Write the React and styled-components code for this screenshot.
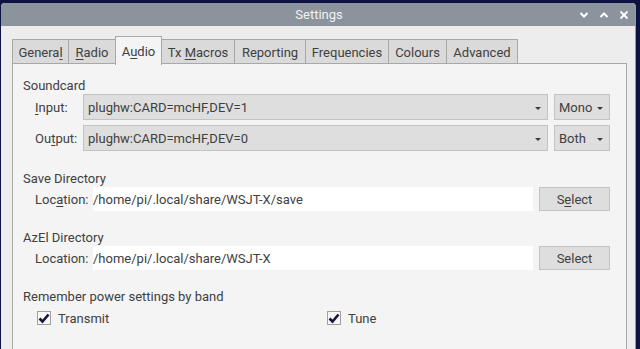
import React from "react";
import styled, { createGlobalStyle } from "styled-components";

const Global = createGlobalStyle`
  html, body { margin: 0; padding: 0; }
  body {
    background: #0c1242;
    font-family: Roboto, "Liberation Sans", sans-serif;
    overflow: hidden;
    width: 640px;
    height: 349px;
  }
`;

const Desktop = styled.div`
  width: 640px;
  height: 349px;
  padding: 3px 0 0 1px;
  box-sizing: border-box;
  display: flex;
`;

const Window = styled.div`
  width: 634px;
  height: 346px;
  background: #ededed;
  border-radius: 4px 4px 0 0;
  border-right: 1px solid #9a9a9a;
  display: flex;
  flex-direction: column;
  overflow: hidden;
`;

const TitleBar = styled.div`
  height: 23px;
  background: #8b949c;
  display: grid;
  grid-template-columns: 1fr auto 1fr;
  align-items: center;
  color: #f2f2f2;
  font-size: 13px;
`;

const Title = styled.div`
  grid-column: 2;
  padding-left: 2px;
`;

const Controls = styled.div`
  grid-column: 3;
  justify-self: end;
  display: flex;
  gap: 10px;
  padding-right: 6px;
  align-items: center;
`;

const Body = styled.div`
  flex: 1;
  display: flex;
  flex-direction: column;
  padding: 10px 8px 0 11px;
`;

const TabRow = styled.div`
  display: flex;
  align-items: flex-end;
  position: relative;
  z-index: 1;
`;

const Tab = styled.div`
  box-sizing: border-box;
  width: ${(p) => p.$w}px;
  height: ${(p) => (p.$active ? 29 : 25)}px;
  margin-left: ${(p) => (p.$first ? 0 : -1)}px;
  margin-bottom: ${(p) => (p.$active ? -1 : 0)}px;
  border: 1px solid #a8a8a8;
  border-bottom: ${(p) => (p.$active ? "none" : "1px solid #a8a8a8")};
  background: ${(p) => (p.$active ? "#f4f4f4" : "#dadada")};
  color: #404040;
  font-size: 13px;
  display: flex;
  align-items: center;
  justify-content: center;
  padding-top: ${(p) => (p.$active ? 0 : 1)}px;
  position: relative;
  z-index: ${(p) => (p.$active ? 2 : 1)};
  white-space: pre;
`;

const Panel = styled.div`
  flex: 1;
  margin-top: -1px;
  border: 1px solid #a8a8a8;
  border-bottom: none;
  background: #f4f4f4;
  padding: 14px 16px 0 10px;
  display: flex;
  flex-direction: column;
  color: #404040;
  font-size: 13px;
`;

const Group = styled.div`
  display: flex;
  flex-direction: column;
  margin-top: ${(p) => p.$gap || 0}px;
`;

const GroupTitle = styled.div`
  height: 16px;
  line-height: 16px;
`;

const Rows = styled.div`
  display: flex;
  flex-direction: column;
  gap: 5px;
  padding-left: 12px;
`;

const Row = styled.div`
  display: flex;
  align-items: center;
  height: ${(p) => p.$h}px;
`;

const Label = styled.div`
  width: ${(p) => p.$w}px;
  flex: none;
`;

const U = styled.span`
  text-decoration: underline;
  text-underline-offset: 2px;
`;

const Combo = styled.div`
  box-sizing: border-box;
  height: 100%;
  flex: ${(p) => (p.$w ? "none" : 1)};
  width: ${(p) => (p.$w ? `${p.$w}px` : "auto")};
  margin-left: ${(p) => p.$ml || 0}px;
  background: #dedede;
  border: 1px solid #c3c3c3;
  display: flex;
  align-items: center;
  padding: 0 6px 0 4px;
  color: #404040;
`;

const ComboText = styled.span`
  flex: 1;
`;

const Arrow = styled.span`
  width: 0;
  height: 0;
  border-left: 3px solid transparent;
  border-right: 3px solid transparent;
  border-top: 3px solid #3c3c3c;
  margin-top: 3px;
`;

const TextField = styled.div`
  box-sizing: border-box;
  height: 100%;
  flex: 1;
  background: #ffffff;
  display: flex;
  align-items: center;
`;

const Button = styled.div`
  box-sizing: border-box;
  height: 100%;
  width: 71px;
  margin-left: 6px;
  background: #dedede;
  border: 1px solid #c3c3c3;
  display: flex;
  align-items: center;
  justify-content: center;
`;

const CheckRow = styled.div`
  display: flex;
  align-items: center;
  height: 26px;
  padding-left: 14px;
`;

const Check = styled.label`
  display: flex;
  align-items: center;
  gap: 7px;
  width: ${(p) => p.$w}px;
`;

const Box = styled.span`
  box-sizing: border-box;
  width: 14px;
  height: 14px;
  border: 1px solid #a0a0a0;
  background: #f7f7f7;
  display: flex;
  align-items: center;
  justify-content: center;
`;

const Chevron = ({ up }) => (
  <svg width="10" height="8" viewBox="0 0 10 8">
    <path
      d={up ? "M1.5 6 L5 2.5 L8.5 6" : "M1.5 2 L5 5.5 L8.5 2"}
      fill="none"
      stroke="#ffffff"
      strokeWidth="2"
    />
  </svg>
);

const CloseIcon = () => (
  <svg width="10" height="10" viewBox="0 0 10 10">
    <path d="M1.5 1.5 L8.5 8.5 M8.5 1.5 L1.5 8.5" stroke="#ffffff" strokeWidth="2" />
  </svg>
);

const Tick = () => (
  <svg width="12" height="11" viewBox="0 0 12 11">
    <path d="M1.5 5.5 L4.5 8.5 L10.5 1.5" fill="none" stroke="#16163a" strokeWidth="2.6" />
  </svg>
);

const tabs = [
  { w: 57, label: <span>Genera<U>l</U></span> },
  { w: 48, label: <span><U>R</U>adio</span> },
  { w: 47, label: <span>A<U>u</U>dio</span>, active: true },
  { w: 74, label: <span>{"Tx "}<U>M</U>acros</span> },
  { w: 72, label: <span>Reportin<U>g</U></span> },
  { w: 84, label: <span>Frequencies</span> },
  { w: 59, label: <span>Colours</span> },
  { w: 72, label: <span>Advanced</span> },
];

export default function App() {
  return (
    <>
      <Global />
      <Desktop>
        <Window>
          <TitleBar>
            <Title>Settings</Title>
            <Controls>
              <Chevron />
              <Chevron up />
              <CloseIcon />
            </Controls>
          </TitleBar>
          <Body>
            <TabRow>
              {tabs.map((t, i) => (
                <Tab key={i} $w={t.w} $active={t.active} $first={i === 0}>
                  {t.label}
                </Tab>
              ))}
            </TabRow>
            <Panel>
              <Group>
                <GroupTitle>Soundcard</GroupTitle>
                <Rows>
                  <Row $h={26}>
                    <Label $w={48}><U>I</U>nput:</Label>
                    <Combo>
                      <ComboText>plughw:CARD=mcHF,DEV=1</ComboText>
                      <Arrow />
                    </Combo>
                    <Combo $w={56} $ml={6}>
                      <ComboText>Mono</ComboText>
                      <Arrow />
                    </Combo>
                  </Row>
                  <Row $h={26}>
                    <Label $w={48}>Ou<U>t</U>put:</Label>
                    <Combo>
                      <ComboText>plughw:CARD=mcHF,DEV=0</ComboText>
                      <Arrow />
                    </Combo>
                    <Combo $w={56} $ml={6}>
                      <ComboText>Both</ComboText>
                      <Arrow />
                    </Combo>
                  </Row>
                </Rows>
              </Group>
              <Group $gap={20}>
                <GroupTitle>Save Directory</GroupTitle>
                <Rows>
                  <Row $h={24}>
                    <Label $w={58}>Loc<U>a</U>tion:</Label>
                    <TextField>/home/pi/.local/share/WSJT-X/save</TextField>
                    <Button>S<U>e</U>lect</Button>
                  </Row>
                </Rows>
              </Group>
              <Group $gap={19}>
                <GroupTitle>AzEl Directory</GroupTitle>
                <Rows>
                  <Row $h={24}>
                    <Label $w={58}>Location:</Label>
                    <TextField>/home/pi/.local/share/WSJT-X</TextField>
                    <Button>Select</Button>
                  </Row>
                </Rows>
              </Group>
              <Group $gap={19}>
                <GroupTitle>Remember power settings by band</GroupTitle>
                <CheckRow>
                  <Check $w={290}>
                    <Box><Tick /></Box>
                    Transmit
                  </Check>
                  <Check $w={100}>
                    <Box><Tick /></Box>
                    Tune
                  </Check>
                </CheckRow>
              </Group>
            </Panel>
          </Body>
        </Window>
      </Desktop>
    </>
  );
}
